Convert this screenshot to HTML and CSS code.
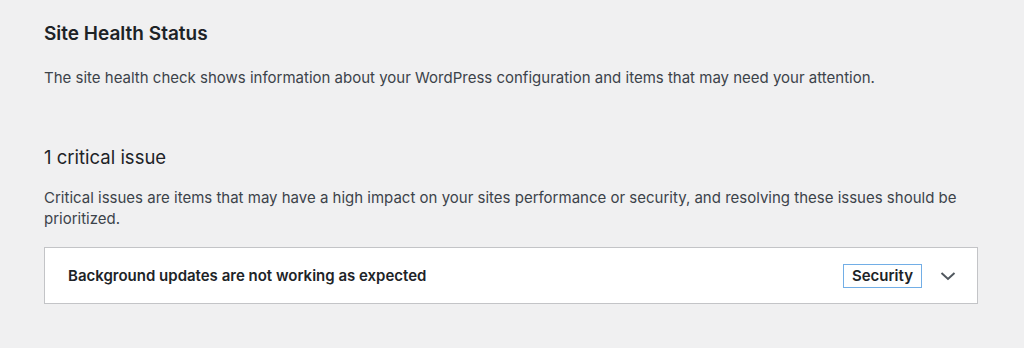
FILE: index.html
```html
<!DOCTYPE html>
<html lang="en">
<head>
  <meta charset="UTF-8" />
  <meta name="viewport" content="width=device-width, initial-scale=1.0"/>
  <title>Site Health Status</title>
  <link rel="stylesheet" href="styles.css">
</head>
<body>

  <section class="health">
    <h2>Site Health Status</h2>
    <p class="intro">The site health check shows information about your WordPress configuration and items that may need your attention.</p>

    <h3>1 critical issue</h3>
    <p class="issues-desc">Critical issues are items that may have a high impact on your sites performance or security, and resolving these issues should be prioritized.</p>

    <div class="issue">
      <span class="issue-title">Background updates are not working as expected</span>
      <span class="badge">Security</span>
      <svg class="chevron" width="20" height="20" viewBox="0 0 20 20">
        <path d="M3.5 7 L10 13 L16.5 7" fill="none" stroke="#50575e" stroke-width="2"/>
      </svg>
    </div>
  </section>

</body>
</html>
```

FILE: styles.css
```css
* {
  margin: 0;
  padding: 0;
  box-sizing: border-box;
}

body {
  background: #f0f0f1;
  color: #1d2327;
  font-family: Inter, "Noto Sans", sans-serif;
  font-size: 15px;
}

.health {
  padding: 22px 46px 0 44px;
}

.health h2 {
  font-size: 19px;
  font-weight: 600;
  line-height: 24px;
}

.intro {
  margin-top: 22px;
  line-height: 20px;
  color: #3c434a;
}

.health h3 {
  font-size: 18.5px;
  font-weight: 400;
  line-height: 24px;
  margin-top: 57px;
}

.issues-desc {
  margin-top: 18px;
  line-height: 21px;
  color: #3c434a;
}

.issue {
  margin-top: 18px;
  height: 57px;
  background: #fff;
  border: 1px solid #c3c4c7;
  display: flex;
  align-items: center;
  padding: 0 19px 0 23px;
}

.issue-title {
  flex: 1;
  font-weight: 600;
  color: #1d2327;
}

.badge {
  border: 1px solid #72aee6;
  padding: 2px 8px;
  font-weight: 600;
  line-height: 18px;
  margin-right: 16px;
}

.chevron {
  display: block;
}
```
